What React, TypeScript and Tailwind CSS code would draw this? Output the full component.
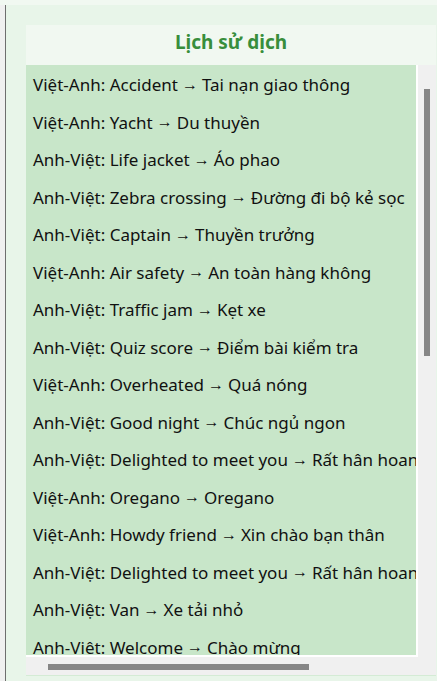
const entries = [
  ['Việt-Anh: Accident', 'Tai nạn giao thông'],
  ['Việt-Anh: Yacht', 'Du thuyền'],
  ['Anh-Việt: Life jacket', 'Áo phao'],
  ['Anh-Việt: Zebra crossing', 'Đường đi bộ kẻ sọc'],
  ['Anh-Việt: Captain', 'Thuyền trưởng'],
  ['Việt-Anh: Air safety', 'An toàn hàng không'],
  ['Anh-Việt: Traffic jam', 'Kẹt xe'],
  ['Anh-Việt: Quiz score', 'Điểm bài kiểm tra'],
  ['Việt-Anh: Overheated', 'Quá nóng'],
  ['Anh-Việt: Good night', 'Chúc ngủ ngon'],
  ['Anh-Việt: Delighted to meet you', 'Rất hân hoan được gặp bạn'],
  ['Việt-Anh: Oregano', 'Oregano'],
  ['Việt-Anh: Howdy friend', 'Xin chào bạn thân'],
  ['Anh-Việt: Delighted to meet you', 'Rất hân hoan được gặp bạn'],
  ['Anh-Việt: Van', 'Xe tải nhỏ'],
  ['Anh-Việt: Welcome', 'Chào mừng'],
];

export default function App() {
  return (
    <div className="flex h-[681px] flex-col bg-[#e8f5e9] font-['Noto_Sans',sans-serif]">
      <div className="h-[5px] bg-[#f1f8f1]" />
      <div className="flex flex-1">
        <div className="w-[5px] bg-[#f0f0f0]" />
        <div className="w-[1px] bg-[#6e6e6e]" />
        <div className="flex flex-1 flex-col pl-[20px] pr-[1px] pt-[20px]">
          <div className="flex h-[40px] items-center justify-center bg-[#f1f8f1] pb-[5px] text-[19px] font-bold text-[#388e3c]">
            Lịch sử dịch
          </div>
          <div className="flex h-[592px]">
            <div className="w-[392px] overflow-hidden border-b-2 border-r-2 border-white bg-[#c8e6c9] pt-[1px]">
              {entries.map(([src, dst], i) => (
                <div
                  key={i}
                  className="flex h-[37.5px] items-center whitespace-nowrap pl-[7px] text-[17px] text-[#111]"
                >
                  {src}{' '}
                  <span className="px-[4px] font-['Liberation_Sans',sans-serif] text-[16px]">→</span>{' '}
                  {dst}
                </div>
              ))}
            </div>
            <div className="flex flex-1 justify-center bg-[#f0f0f0] pt-[24px]">
              <div className="h-[267px] w-[6px] bg-[#868686]" />
            </div>
          </div>
          <div className="h-[19px] border-b border-[#d4ebd5] bg-[#f0f0f0] pl-[22px] pt-[7px]">
            <div className="h-[6px] w-[261px] bg-[#868686]" />
          </div>
        </div>
      </div>
    </div>
  );
}
